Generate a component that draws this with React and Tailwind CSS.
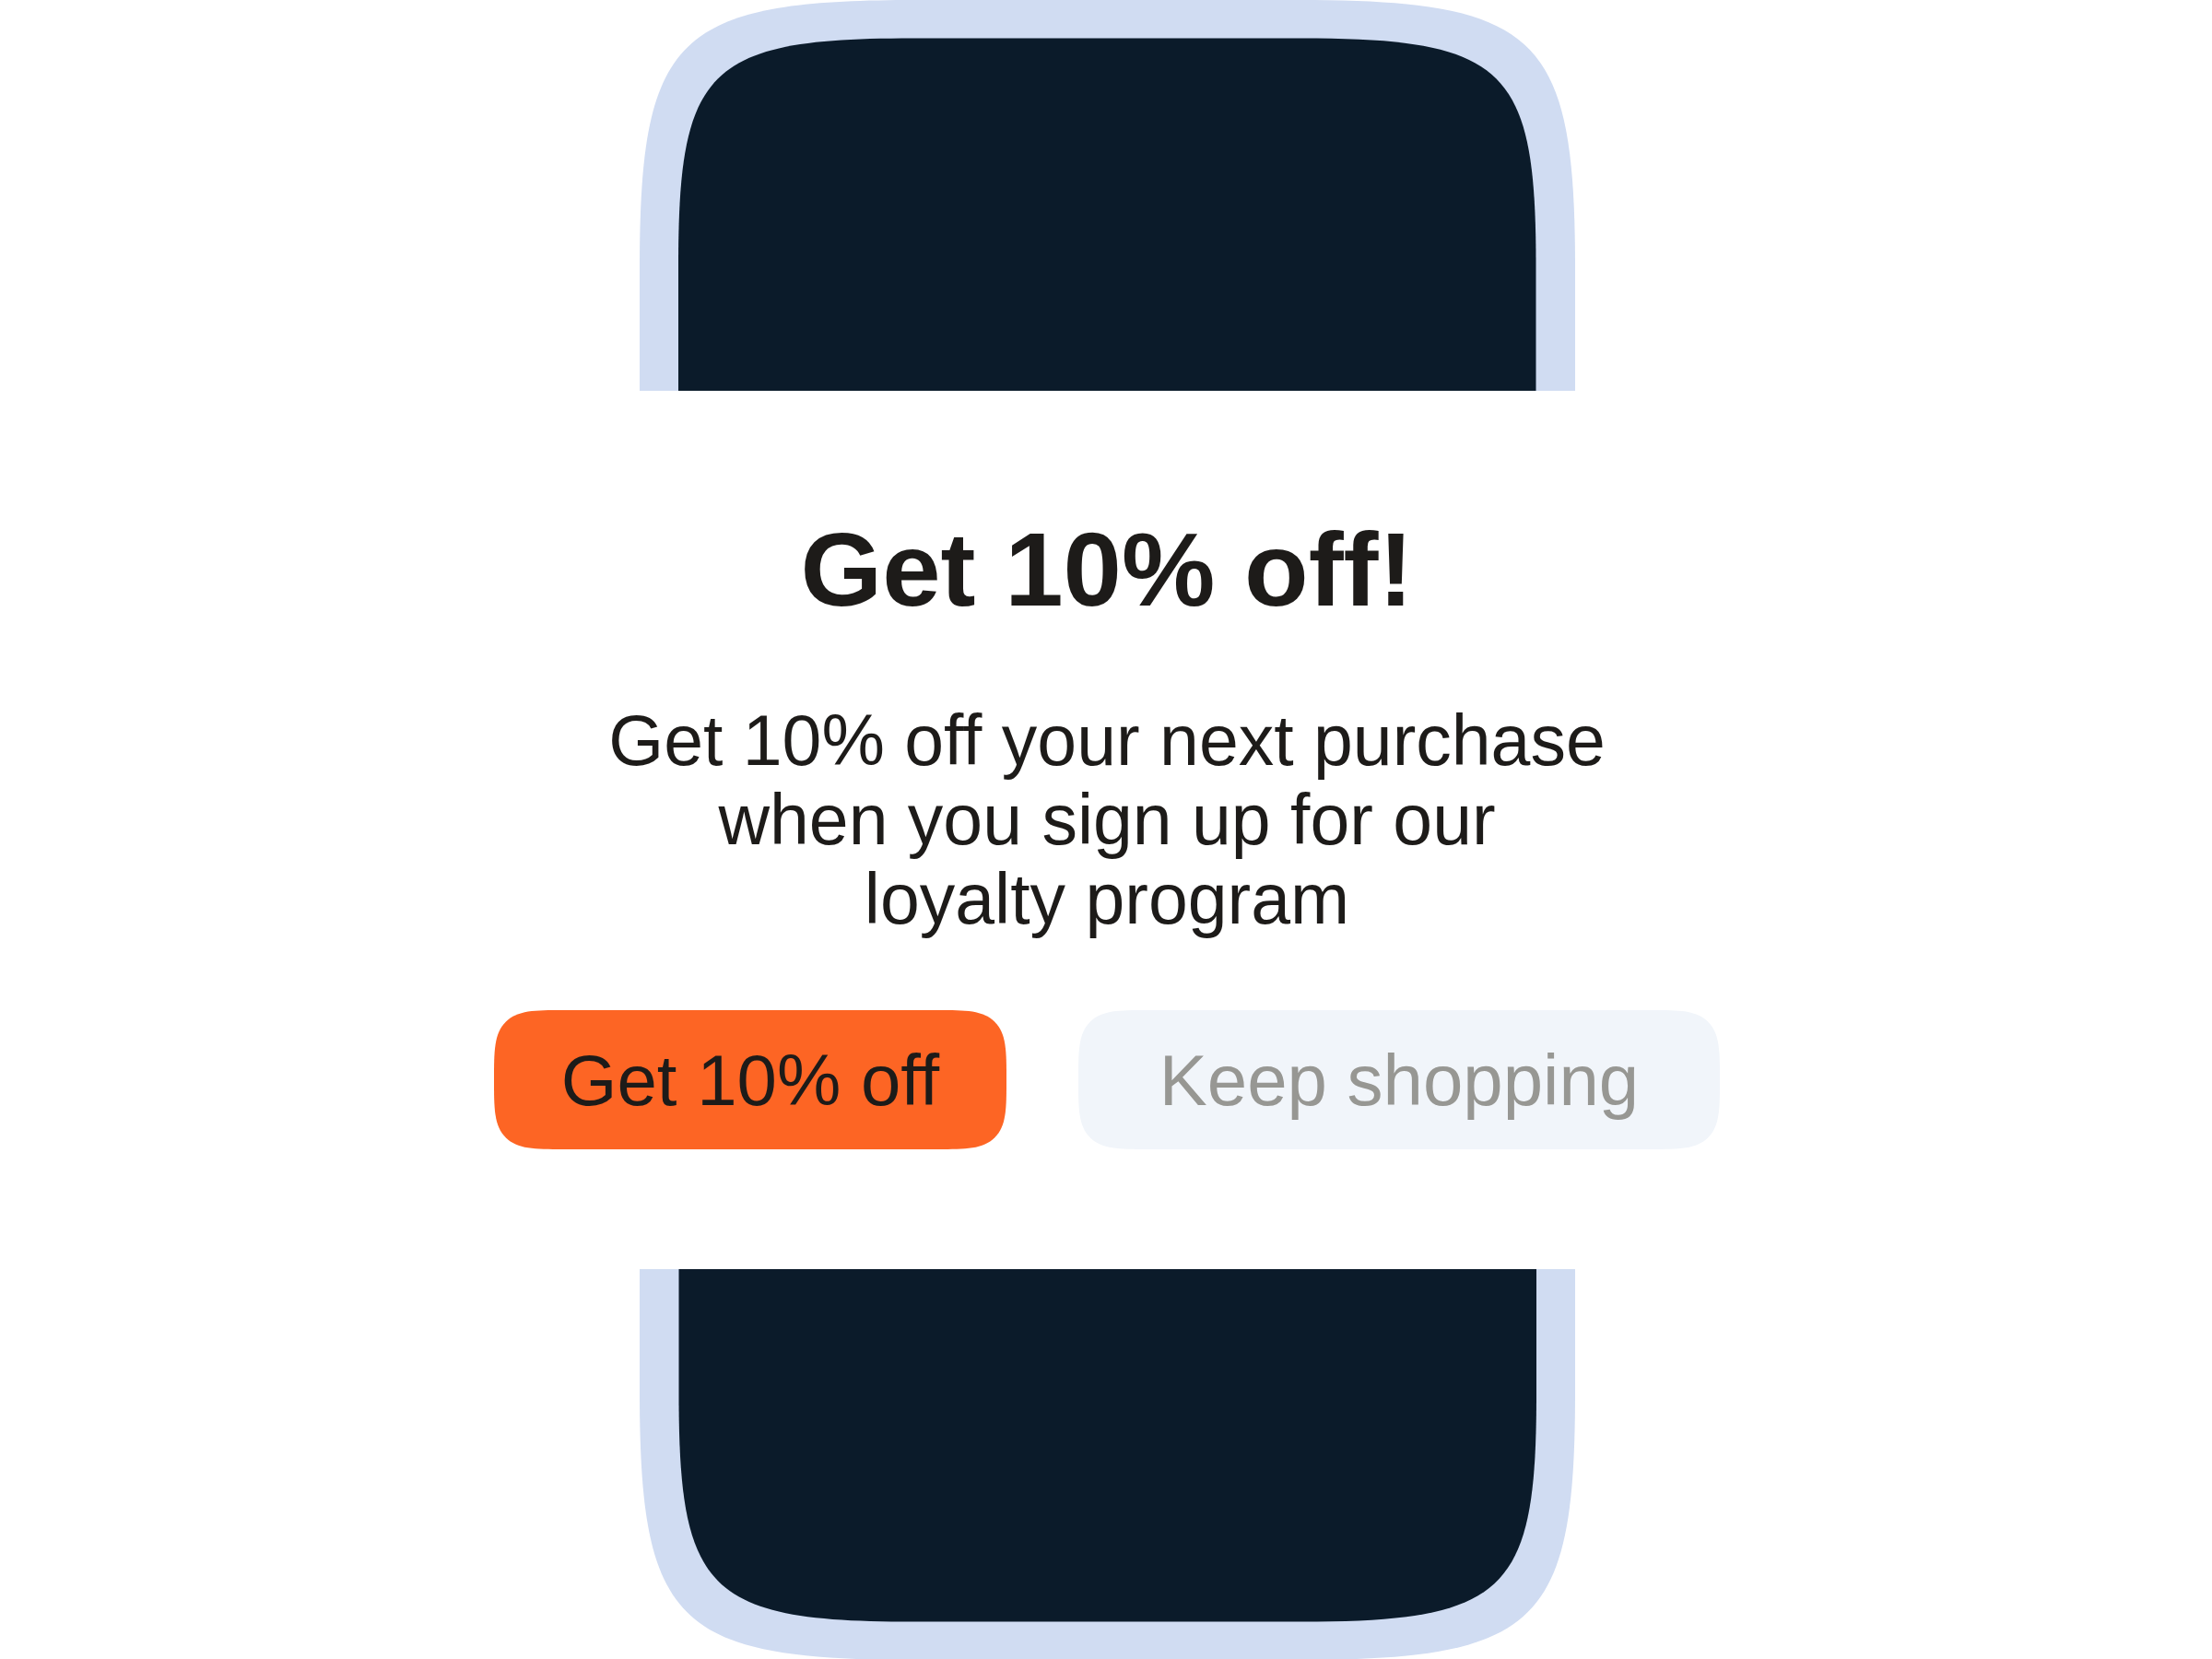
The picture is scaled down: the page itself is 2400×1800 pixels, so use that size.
// ─── PHONE END ─────────────────────────────────────────────────────────────
const PhoneEnd = ({ className }) => (
  <svg className={className} viewBox="0 0 1015 424" aria-hidden="true">
    <path fill="#d0dcf2" d="M0 424V292C0 39 39 0 300 0H715C976 0 1015 39 1015 292V424Z" />
    <path fill="#0b1b2a" d="M42 424V288C42 74 74 41.5 297 41.5H717.5C940.5 41.5 972.5 74 972.5 288V424Z" />
  </svg>
);

const buttonBase =
  "h-[151px] rounded-[75px] [corner-shape:superellipse(1.9)] text-[78px] leading-none whitespace-nowrap cursor-pointer";

export default function App() {
  return (
    <main className="flex min-h-screen flex-col items-center bg-white pl-0.5 font-['Liberation_Sans',Arial,sans-serif] text-[#1d1b19]">
      <PhoneEnd className="block h-auto w-full max-w-[1015px]" />

      <section className="flex flex-col items-center pt-[137px] pb-[130px] text-center">
        <h1 className="text-[114px] leading-none font-bold">Get 10% off!</h1>

        <p className="mt-[85px] text-[77px] leading-[86px]">
          Get 10% off your next purchase
          <br />
          when you sign up for our
          <br />
          loyalty program
        </p>

        <div className="mt-[78px] flex flex-wrap justify-center gap-[78px]">
          <button type="button" className={`${buttonBase} w-[556px] bg-[#fd6524]`}>
            Get 10% off
          </button>
          <button type="button" className={`${buttonBase} w-[696px] bg-[#f1f5fa] text-[#979793]`}>
            Keep shopping
          </button>
        </div>
      </section>

      <PhoneEnd className="block h-auto w-full max-w-[1015px] rotate-180" />
    </main>
  );
}
